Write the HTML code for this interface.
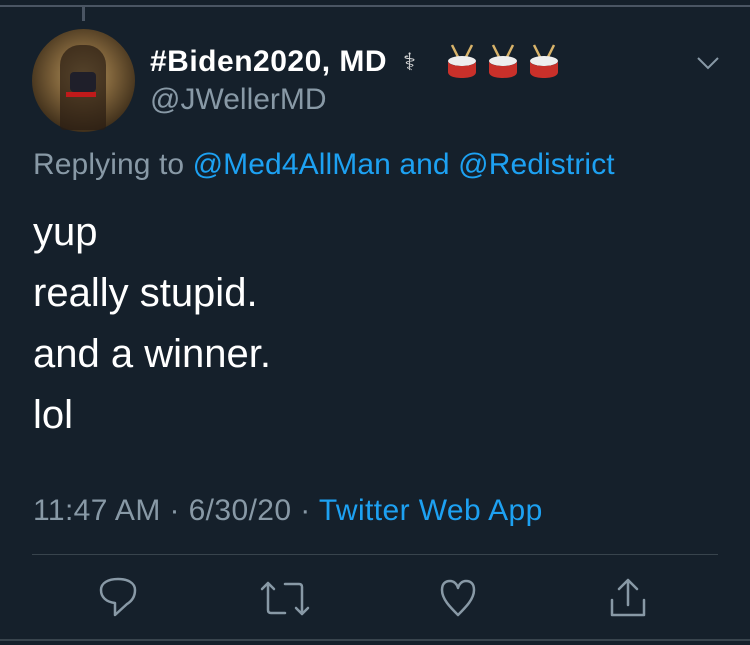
<!DOCTYPE html>
<html><head><style>
body{margin:0;width:750px;height:645px;background:#15202b;font-family:"Liberation Sans",sans-serif;position:relative;overflow:hidden}
.a{position:absolute;white-space:nowrap}
</style></head><body>
<div class="a" style="left:0;top:5px;width:750px;height:2px;background:#4a5563"></div>
<div class="a" style="left:82px;top:7px;width:3px;height:14px;background:#4a5563"></div>
<div class="a" style="left:32px;top:29px;width:103px;height:103px;border-radius:50%;background:radial-gradient(circle at 50% 45%,#b89a62 0%,#7a5f38 40%,#3e2e1a 75%)"></div>
<div class="a" style="left:60px;top:45px;width:46px;height:85px;background:#2a1d12;border-radius:20px 20px 4px 4px;opacity:.7"></div>
<div class="a" style="left:70px;top:72px;width:26px;height:20px;background:#1f1f2a;border-radius:4px"></div>
<div class="a" style="left:66px;top:92px;width:30px;height:5px;background:#c01a1a"></div>
<div class="a" style="left:150px;top:45px;color:#fff;font-size:30px;font-weight:bold;letter-spacing:0.5px">#Biden2020, MD</div>
<div class="a" style="left:403px;top:48px;color:#ddd;font-size:24px">⚕</div>
<svg class="a" style="left:446px;top:44px" width="120" height="36" viewBox="0 0 120 36">
<g id="d"><line x1="6" y1="1" x2="13" y2="15" stroke="#d8b36a" stroke-width="2.5"/><line x1="26" y1="1" x2="19" y2="15" stroke="#d8b36a" stroke-width="2.5"/><ellipse cx="16" cy="17" rx="14" ry="5" fill="#eee"/><path d="M2 17v11c0 4 6 6 14 6s14-2 14-6V17c0 3-6 5-14 5S2 20 2 17z" fill="#c9302a"/></g>
<use href="#d" x="41"/><use href="#d" x="82"/></svg>
<div class="a" style="left:150px;top:83px;color:#8899a6;font-size:30px">@JWellerMD</div>
<svg class="a" style="left:696px;top:55px" width="24" height="16"><path d="M2 3l10 10 10-10" fill="none" stroke="#8899a6" stroke-width="2"/></svg>
<div class="a" style="left:33px;top:148px;color:#8899a6;font-size:30px;letter-spacing:0.1px">Replying to <span style="color:#1da1f2">@Med4AllMan and @Redistrict</span></div>
<div class="a" style="left:33px;top:202px;color:#fff;font-size:40px;line-height:61px">yup<br>really stupid.<br>and a winner.<br>lol</div>
<div class="a" style="left:33px;top:494px;color:#8899a6;font-size:30px;letter-spacing:0.4px">11:47 AM · 6/30/20 · <span style="color:#1da1f2">Twitter Web App</span></div>
<div class="a" style="left:32px;top:554px;width:686px;height:1px;background:#38444d"></div>
<div class="a" style="left:0;top:639px;width:750px;height:2px;background:#38444d"></div>
<svg class="a" style="left:0;top:0" width="750" height="645" fill="none" stroke="#8899a6" stroke-width="2.5" stroke-linejoin="round" stroke-linecap="round">
<path d="M115 615l12-11c5-3 8-8 8-14 0-7-7-11-17-11s-17 4-17 11c0 7 5 12 14 13z"/>
<path d="M262 589l6-6 6 6M268 583v27c0 2 1 3 3 3h14M308 608l-6 6-6-6M302 614v-27c0-2-1-3-3-3h-14"/>
<path d="M458 615c-8-8-16-16-16-25 0-6 3-9 8-9 4 0 7 3 8 7 1-4 4-7 8-7 5 0 8 3 8 9 0 9-8 17-16 25z"/>
<path d="M628 605v-24M619 589l9-9 9 9M612 600v15h32v-15"/>
</svg>
</body></html>
